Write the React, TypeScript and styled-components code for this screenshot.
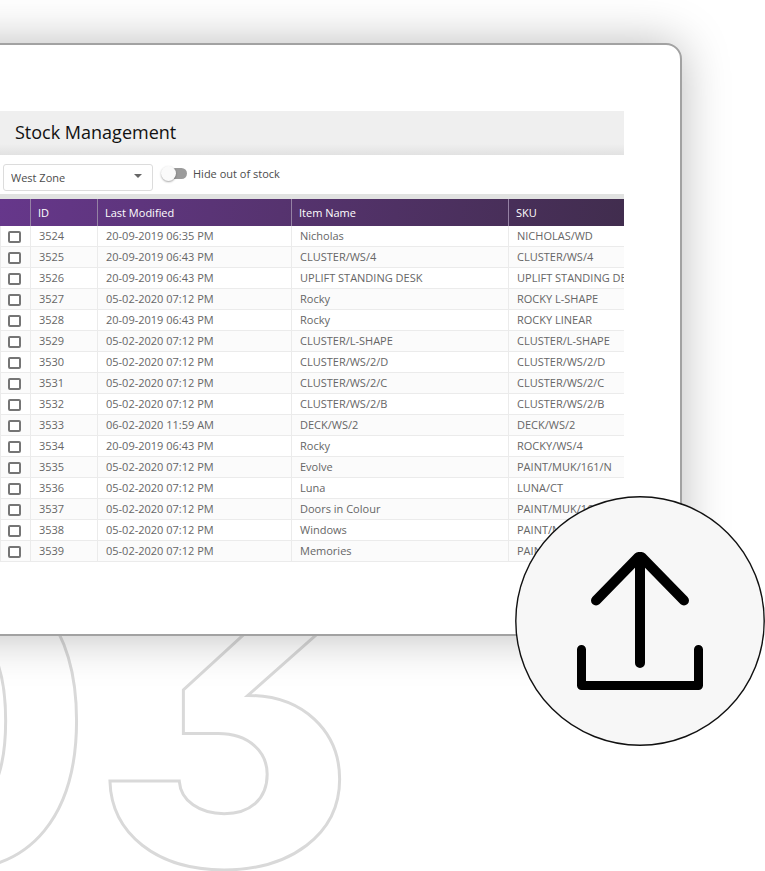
import React from "react";
import styled, { createGlobalStyle } from "styled-components";

const GlobalStyle = createGlobalStyle`
  *, *::before, *::after { box-sizing: border-box; }
  body {
    margin: 0;
    background: #fff;
    font-family: "Open Sans", "Noto Sans", sans-serif;
    font-size: 11px;
    color: #666;
  }
`;

const Page = styled.main`
  position: relative;
  min-height: 100vh;
  padding: 43px 83px 235px 0;
  overflow: hidden;
`;

const StepNumber = styled.div`
  position: absolute;
  left: -184px;
  bottom: 4px;
  font: 800 400px/294px Inter, sans-serif;
  font-feature-settings: "cv09" 1;
  color: #fff;
  -webkit-text-stroke: 3px #d9d9d9;
  white-space: nowrap;
  user-select: none;
`;

const Card = styled.section`
  position: relative;
  margin-left: -60px;
  padding: 66px 56px 72px 58px;
  border: 2px solid #a2a2a2;
  border-radius: 16px;
  background: #fff;
  box-shadow: 0 0 48px rgba(0, 0, 0, 0.27);
`;

const Panel = styled.div`
  overflow: hidden;
`;

const PanelHeader = styled.header`
  display: flex;
  align-items: center;
  height: 44px;
  padding: 0 15px 2px;
  background: linear-gradient(#efefef 75%, #e2e2e2);
`;

const Title = styled.h1`
  margin: 0;
  font-size: 18px;
  font-weight: 400;
  line-height: 24px;
  color: #111;
`;

const Toolbar = styled.div`
  display: flex;
  align-items: flex-start;
  gap: 8px;
  height: 44px;
  padding: 9px 3px 0;
  border-bottom: 5px solid #e1e2e1;
`;

const SelectBox = styled.div`
  display: grid;
  align-items: center;
  width: 150px;

  & > * { grid-area: 1 / 1; }
`;

const Select = styled.select`
  appearance: none;
  height: 27px;
  padding: 0 8px 0 7px;
  border: 1px solid #dcdcdc;
  border-radius: 3px;
  background: #fff;
  font: inherit;
  color: #4c4c4c;
`;

const Caret = styled.svg`
  justify-self: end;
  width: 8px;
  height: 4px;
  margin: 0 11px 4px 0;
  pointer-events: none;
`;

const SwitchLabel = styled.label`
  display: flex;
  align-items: center;
  gap: 5px;
  height: 18px;
  color: #4c4c4c;
`;

const Switch = styled.input`
  appearance: none;
  display: flex;
  align-items: center;
  width: 24px;
  height: 11px;
  margin: 0 1px 0 2px;
  border-radius: 6px;
  background: #9b9b9b;

  &::before {
    content: "";
    flex: none;
    width: 15px;
    height: 15px;
    margin-left: -2px;
    border-radius: 50%;
    background: #fafafa;
    box-shadow: 0 1px 2px rgba(0, 0, 0, 0.35);
  }
  &:checked::before { margin-left: 11px; }
`;

const Table = styled.table`
  width: 100%;
  table-layout: fixed;
  border-collapse: separate;
  border-spacing: 0;
`;

const Column = styled.col<{ $width?: number }>`
  width: ${({ $width }) => ($width ? `${$width}px` : "auto")};
`;

const HeadRow = styled.tr`
  background: linear-gradient(100deg, #66378b, #56336f 45%, #412d4e);
`;

const HeadCell = styled.th`
  height: 27px;
  padding: 0 7px;
  border-right: 1px solid #9582a4;
  font-weight: 400;
  text-align: left;
  white-space: nowrap;
  color: #fff;

  &:last-child { border-right: 0; }
`;

const Row = styled.tr`
  &:nth-child(even) { background: #fbfbfb; }
`;

const Cell = styled.td`
  height: 21px;
  padding: 0 0 0 8px;
  border-right: 1px solid #ebebeb;
  border-bottom: 1px solid #ebebeb;
  line-height: 16px;
  white-space: nowrap;
  overflow: hidden;

  &:first-child {
    padding-left: 7px;
    border-left: 1px solid #ebebeb;
  }
  &:last-child { border-right: 0; }
`;

const CheckBox = styled.input`
  appearance: none;
  display: block;
  width: 13px;
  height: 12px;
  margin: 2px 0 0;
  border: 2px solid #757575;
  border-radius: 2px;
  background: #fff;

  &:checked { background: #66378b; }
`;

const UploadButton = styled.button`
  position: absolute;
  right: -85px;
  bottom: -112px;
  width: 250px;
  height: 250px;
  padding: 0;
  border: 0;
  border-radius: 50%;
  background: none;
  cursor: pointer;
`;

const UploadIcon = styled.svg`
  display: block;
  width: 100%;
  height: 100%;
`;

const rows = [
  ["3524", "20-09-2019 06:35 PM", "Nicholas", "NICHOLAS/WD"],
  ["3525", "20-09-2019 06:43 PM", "CLUSTER/WS/4", "CLUSTER/WS/4"],
  ["3526", "20-09-2019 06:43 PM", "UPLIFT STANDING DESK", "UPLIFT STANDING DESK"],
  ["3527", "05-02-2020 07:12 PM", "Rocky", "ROCKY L-SHAPE"],
  ["3528", "20-09-2019 06:43 PM", "Rocky", "ROCKY LINEAR"],
  ["3529", "05-02-2020 07:12 PM", "CLUSTER/L-SHAPE", "CLUSTER/L-SHAPE"],
  ["3530", "05-02-2020 07:12 PM", "CLUSTER/WS/2/D", "CLUSTER/WS/2/D"],
  ["3531", "05-02-2020 07:12 PM", "CLUSTER/WS/2/C", "CLUSTER/WS/2/C"],
  ["3532", "05-02-2020 07:12 PM", "CLUSTER/WS/2/B", "CLUSTER/WS/2/B"],
  ["3533", "06-02-2020 11:59 AM", "DECK/WS/2", "DECK/WS/2"],
  ["3534", "20-09-2019 06:43 PM", "Rocky", "ROCKY/WS/4"],
  ["3535", "05-02-2020 07:12 PM", "Evolve", "PAINT/MUK/161/N"],
  ["3536", "05-02-2020 07:12 PM", "Luna", "LUNA/CT"],
  ["3537", "05-02-2020 07:12 PM", "Doors in Colour", "PAINT/MUK/161/N"],
  ["3538", "05-02-2020 07:12 PM", "Windows", "PAINT/MUK/161/N"],
  ["3539", "05-02-2020 07:12 PM", "Memories", "PAINT/MUK/161/N"],
];

export default function App() {
  return (
    <>
      <GlobalStyle />
      <Page>
        <StepNumber>03</StepNumber>
        <Card>
          <Panel>
            <PanelHeader>
              <Title>Stock Management</Title>
            </PanelHeader>
            <Toolbar>
              <SelectBox>
                <Select aria-label="Zone" defaultValue="West Zone">
                  <option>West Zone</option>
                </Select>
                <Caret viewBox="0 0 8 4" aria-hidden="true">
                  <path d="M0 0h8L4 4z" fill="#666" />
                </Caret>
              </SelectBox>
              <SwitchLabel>
                <Switch type="checkbox" role="switch" />
                Hide out of stock
              </SwitchLabel>
            </Toolbar>
            <Table>
              <colgroup>
                <Column $width={31} />
                <Column $width={67} />
                <Column $width={194} />
                <Column $width={217} />
                <Column />
              </colgroup>
              <thead>
                <HeadRow>
                  <HeadCell aria-label="Select" />
                  <HeadCell>ID</HeadCell>
                  <HeadCell>Last Modified</HeadCell>
                  <HeadCell>Item Name</HeadCell>
                  <HeadCell>SKU</HeadCell>
                </HeadRow>
              </thead>
              <tbody>
                {rows.map((row) => (
                  <Row key={row[0]}>
                    <Cell>
                      <CheckBox type="checkbox" aria-label={`Select ${row[0]}`} />
                    </Cell>
                    {row.map((value, column) => (
                      <Cell key={column}>{value}</Cell>
                    ))}
                  </Row>
                ))}
              </tbody>
            </Table>
          </Panel>
          <UploadButton type="button" aria-label="Upload">
            <UploadIcon viewBox="0 0 250 250" fill="none" stroke="#000" strokeLinecap="round" strokeLinejoin="round">
              <circle cx="125" cy="125" r="124.2" fill="#f7f7f7" stroke="#111" strokeWidth="1.4" />
              <path d="M81 104.5 123.5 61h3L169 104.5M125 62v105" strokeWidth="10" />
              <path d="M66.5 153.5v36h117v-36" strokeWidth="9" />
            </UploadIcon>
          </UploadButton>
        </Card>
      </Page>
    </>
  );
}
